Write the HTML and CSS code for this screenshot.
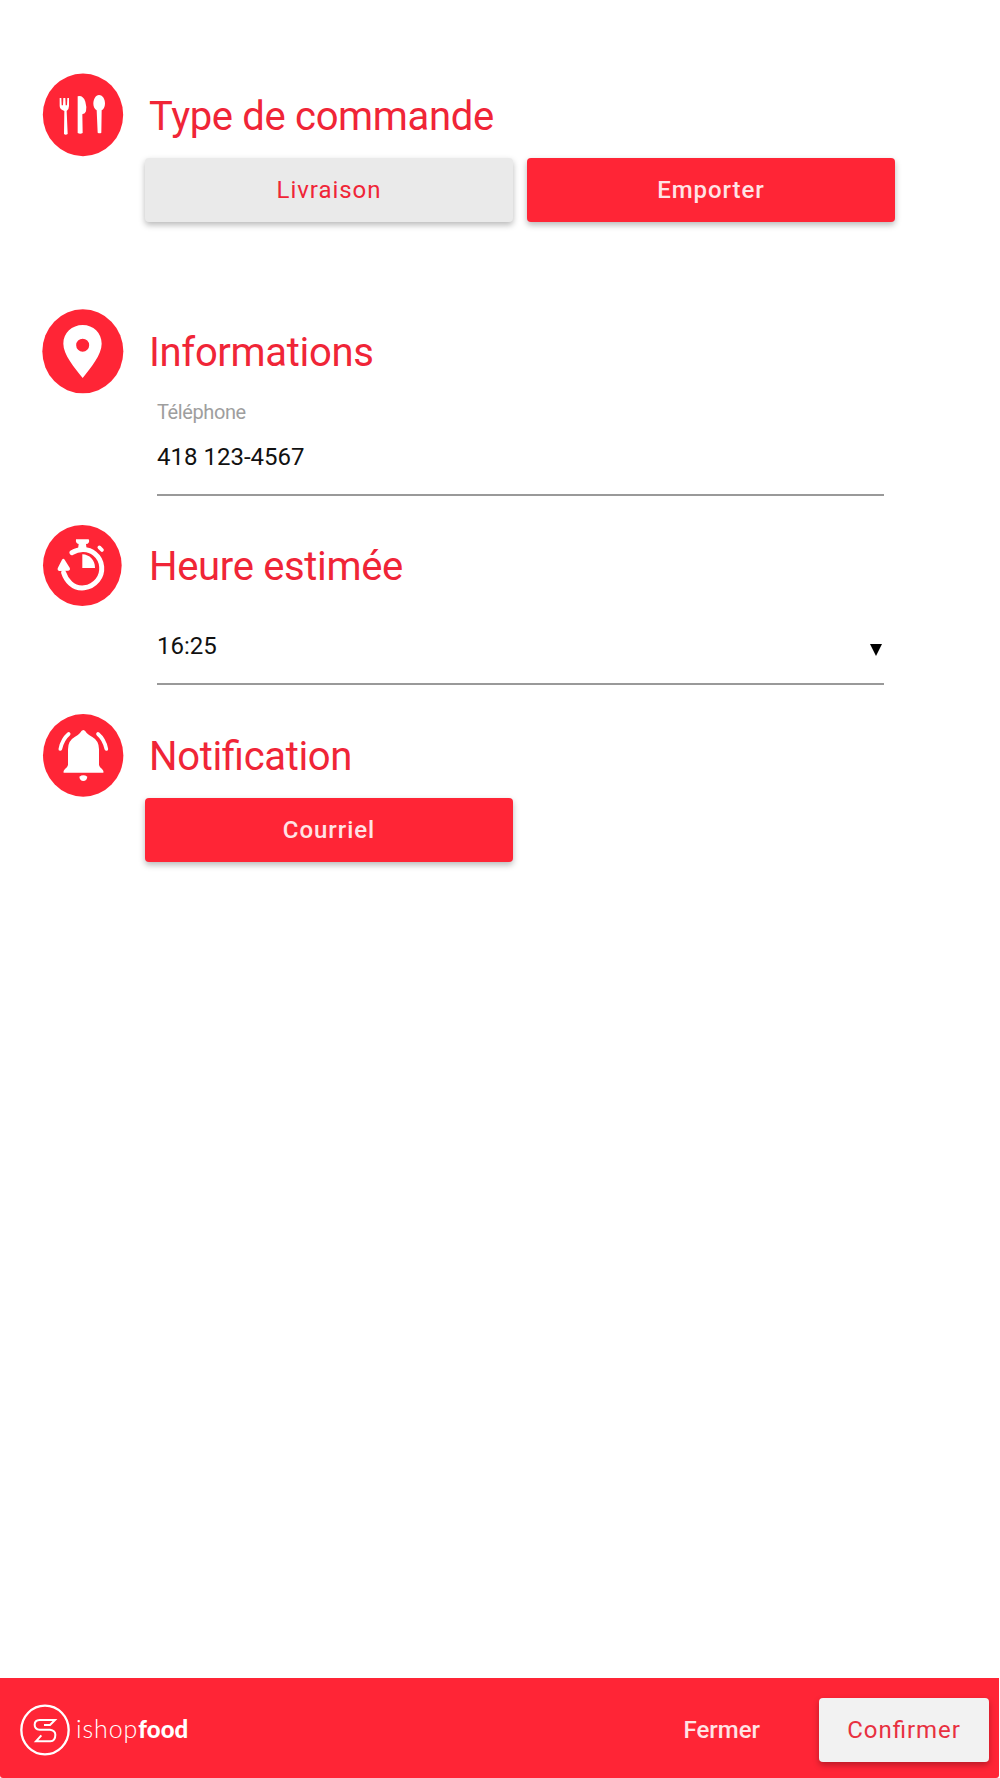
FILE: index.html
```html
<!DOCTYPE html>
<html lang="fr">
<head>
<meta charset="utf-8">
<title>ishopfood</title>
<link rel="stylesheet" href="styles.css">
</head>
<body>
<main class="order">
  <section class="step step-type">
    <svg class="step-icon" viewBox="0 0 270 270">
      <ellipse class="disc" cx="135" cy="134.500" rx="120.500" ry="124"/>
      <path class="glyph" d="M65 84h5l1 22h4l1-22h6l1 22h4l1-22h5v24q0 10-7 15l3 69q-6 5-11 0l1-69q-14-5-14-15z"/>
      <path class="glyph" d="M119 79q16-4 23 16 5 17 2 29-2 7-11 9l1 56q-7 4-15 0z"/>
      <path class="glyph" d="M183 75c12 0 18 14 18 26 0 10-5 17-10 20l-1 67q-5 4-11 0l-3-67c-6-4-10-11-10-20 0-13 7-26 17-26z"/>
    </svg>
    <div class="step-body">
      <h2 class="step-title">Type de commande</h2>
      <div class="choices">
        <button class="btn btn-light">Livraison</button>
        <button class="btn btn-primary">Emporter</button>
      </div>
    </div>
  </section>

  <section class="step step-info">
    <svg class="step-icon" viewBox="0 0 270 270">
      <ellipse class="disc" cx="134.500" cy="136" rx="121.500" ry="126"/>
      <path class="glyph" fill-rule="evenodd" d="M134 57c32 0 57 24 57 56 0 34-32 70-57 103-25-33-58-69-58-103 0-32 26-56 58-56zM134 98a19.500 19.500 0 1 0 0 39a19.500 19.500 0 1 0 0-39z"/>
    </svg>
    <div class="step-body">
      <h2 class="step-title">Informations</h2>
      <div class="field">
        <div class="field-label">Téléphone</div>
        <div class="field-value phone">418 123-4567</div>
      </div>
    </div>
  </section>

  <section class="step step-time">
    <svg class="step-icon" viewBox="0 0 270 270">
      <ellipse class="disc" cx="133" cy="136.500" rx="118" ry="121.500"/>
      <path class="stroke dial" d="M102 98C123 85 151 85 170 101C196 122 197 158 179 181C157 208 120 211 97 190Q83 177 77 158"/>
      <path class="glyph" d="M72 119q4-5 8 0l15 24q3 7-4 9l-28 1q-6-1-4-8z"/>
      <path class="glyph" d="M114 58h38q4 8-3 13l-5 1 2 16h-26l2-16q-10-1-8-14z"/>
      <path class="glyph" d="M133 103c22 1 38 17 38 41h-38z"/>
      <path class="stroke tick" d="M184 82l8 8"/>
    </svg>
    <div class="step-body">
      <h2 class="step-title">Heure estimée</h2>
      <div class="field field-select">
        <div class="field-value time">16:25</div>
        <svg class="caret" viewBox="0 0 12 12"><path d="M0 0h12L6 12z"/></svg>
      </div>
    </div>
  </section>

  <section class="step step-notify">
    <svg class="step-icon" viewBox="0 0 270 270">
      <ellipse class="disc" cx="135.500" cy="136" rx="120.500" ry="124"/>
      <path class="glyph" d="M136 60q5 0 10 9 7 7 17 12 20 11 20 37v47q1 6 9 12 6 6 4 11H77q-2-5 4-11 8-6 9-12v-47q0-26 20-37 10-5 16-12 5-9 10-9z"/>
      <path class="glyph" d="M124 200q12-8 24 0-2 13-12 13t-12-13z"/>
      <path class="stroke ring" d="M92 72Q73 88 67 117M180 72Q199 88 205 117"/>
    </svg>
    <div class="step-body">
      <h2 class="step-title">Notification</h2>
      <div class="choices">
        <button class="btn btn-primary">Courriel</button>
      </div>
    </div>
  </section>
</main>

<footer class="bar">
  <div class="brand">
    <svg class="brand-mark" viewBox="0 0 150 156">
      <ellipse cx="75" cy="78" rx="71" ry="73" stroke-width="7"/>
      <path stroke-width="6" d="M72 63H90L105 48H59Q44 49 44 62Q44 76 59 77H90Q106 79 106 92Q106 111 91 112H48L64 94"/>
    </svg>
    <span class="brand-name"><span class="thin">ishop</span><b>food</b></span>
  </div>
  <div class="actions">
    <button class="btn-text">Fermer</button>
    <button class="btn btn-confirm">Confirmer</button>
  </div>
</footer>
</body>
</html>
```
FILE: styles.css
```css
* { box-sizing: border-box; }

body {
  margin: 0;
  width: 1000px;
  height: 1778px;
  display: flex;
  flex-direction: column;
  background: #fff;
  color: #111;
  font-family: Roboto, "Liberation Sans", sans-serif;
  font-feature-settings: "liga" 1;
}

.order { flex: 1; padding: 70px 105px 0 38px; }

.step { display: grid; grid-template-columns: 107px 1fr; }
.step-type { height: 236px; }
.step-info { height: 214px; }
.step-time { height: 190px; }

.step-icon { width: 90px; height: 90px; display: block; }
.disc { fill: #ff2536; }
.glyph { fill: #fff; }
.stroke { fill: none; stroke: #fff; stroke-linecap: round; }
.dial { stroke-width: 15; }
.tick { stroke-width: 11; }
.ring { stroke-width: 11; }

.step-title {
  margin: 0;
  padding: 5px 0 0 4px;
  height: 88px;
  line-height: 84px;
  font-size: 40px;
  font-weight: 400;
  letter-spacing: -.33px;
  color: #f02537;
  white-space: nowrap;
}

.choices { display: grid; grid-template-columns: 368px 368px; gap: 14px; }

.btn, .btn-text {
  border: 0;
  padding: 0;
  height: 64px;
  font: 500 24px/64px Roboto, "Liberation Sans", sans-serif;
  font-feature-settings: "liga" 1;
}
.btn {
  border-radius: 4px;
  letter-spacing: .95px;
  box-shadow: 0 3px 6px rgba(0, 0, 0, .28);
}
.btn-light { background: #eaeaea; color: #f02537; font-weight: 400; }
.btn-primary { background: #ff2536; color: #ffe3e5; }

.field {
  margin: 0 11px 0 12px;
  border-bottom: 2px solid #999;
  height: 102px;
  padding-top: 6px;
}
.field-label {
  font-size: 20px;
  line-height: 24px;
  letter-spacing: -.4px;
  color: #9e9e9e;
}
.field-value { font-size: 24px; line-height: 30px; }
.phone { margin-top: 18px; }
.field-select {
  height: 77px;
  padding-top: 23px;
  display: flex;
  justify-content: space-between;
}
.caret { width: 12px; height: 12px; margin: 13px 2px 0 0; }

.bar {
  height: 100px;
  margin-right: 1px;
  padding: 0 10px 0 20px;
  background: #ff2536;
  border-radius: 0 0 3px 3px;
  display: flex;
  justify-content: space-between;
}
.brand { display: flex; align-items: center; gap: 6px; padding-top: 4px; }
.brand-mark { width: 50px; height: 52px; fill: none; stroke: #fff; }
.brand-name {
  padding-bottom: 3px;
  font: 300 25px/30px Lato, sans-serif;
  color: #fff;
}
.brand-name .thin { letter-spacing: .9px; }
.brand-name b { font-weight: 900; font-size: 24px; letter-spacing: .1px; }
.actions { display: flex; padding-top: 20px; gap: 59px; }
.btn-text { background: none; color: #ffe3e5; }
.btn-confirm { width: 170px; background: #f2f2f2; color: #e83040; font-weight: 400; }
```
